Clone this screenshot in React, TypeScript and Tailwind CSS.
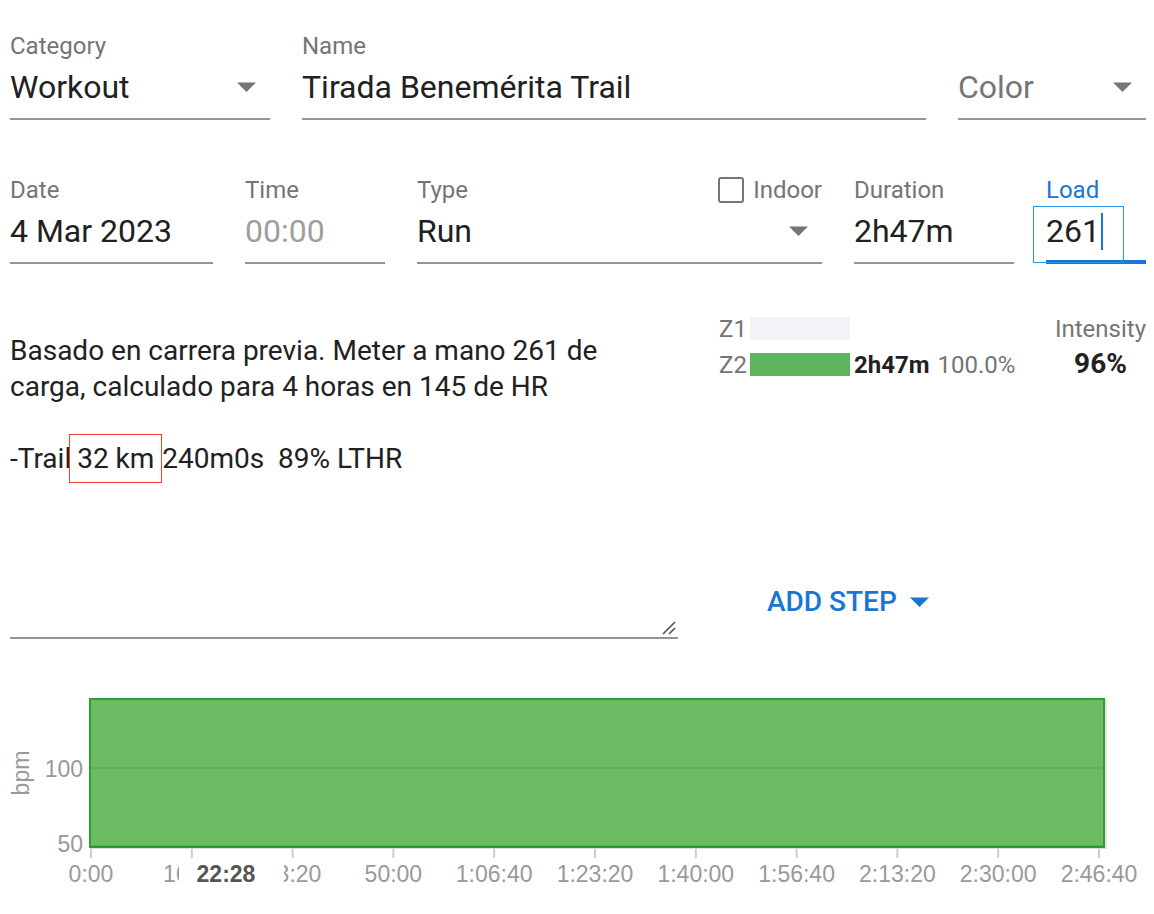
import React from "react"

// ============================================
// SMALL PIECES
// ============================================

function ArrowDrop({ color = "#757575" }: { color?: string }) {
  return (
    <svg width="19" height="10" viewBox="0 0 19 10" className="shrink-0">
      <path d="M0 0.5h19L9.5 10z" fill={color} />
    </svg>
  )
}

type FieldProps = {
  label?: string
  width: string
  children: React.ReactNode
  right?: React.ReactNode
  labelRight?: React.ReactNode
}

function Field({ label, width, children, right, labelRight }: FieldProps) {
  return (
    <div className={`flex flex-col ${width}`}>
      <div className="h-[24px] flex items-center justify-between text-[24px] leading-[24px] text-[#757575]">
        <span>{label}</span>
        {labelRight}
      </div>
      <div className="mt-[10px] h-[52px] border-b-2 border-[#949494] flex items-start justify-between">
        <div className="text-[32px] leading-[38px] text-[#212121] truncate">{children}</div>
        {right && <div className="h-[38px] flex items-center pr-[14px]">{right}</div>}
      </div>
    </div>
  )
}

// ============================================
// CHART
// ============================================

const ticks = ["0:00", "16:40", "33:20", "50:00", "1:06:40", "1:23:20", "1:40:00", "1:56:40", "2:13:20", "2:30:00", "2:46:40"]

function HeartChart() {
  return (
    <svg width="1154" height="234" viewBox="0 0 1154 234" className="block">
      <line x1="90" y1="168" x2="1107" y2="168" stroke="#dddddd" strokeWidth="2" />
      <line x1="1106" y1="19" x2="1106" y2="168" stroke="#e4e4e4" strokeWidth="2" />
      <rect x="90" y="19" width="1014" height="148" fill="#6cbc64" stroke="#2ca02c" strokeWidth="2" />
      <line x1="91" y1="88" x2="1103" y2="88" stroke="rgba(0,0,0,0.07)" strokeWidth="2" />
      <line x1="91" y1="166" x2="1103" y2="166" stroke="rgba(0,0,0,0.07)" strokeWidth="2" />
      <g fontFamily="'Liberation Sans', Arial, sans-serif" fontSize="23" fill="#999999">
        {ticks.map((t, i) => {
          const x = 91 + i * 100.8
          return (
            <g key={t}>
              <line x1={x} y1="169" x2={x} y2="178" stroke="#cccccc" strokeWidth="2" />
              <text x={x} y="202" textAnchor="middle">{t}</text>
            </g>
          )
        })}
        <text x="83" y="97" textAnchor="end">100</text>
        <text x="83" y="172" textAnchor="end">50</text>
        <text transform="translate(29 93) rotate(-90)" textAnchor="middle">bpm</text>
      </g>
      {/* hover label */}
      <rect x="179" y="180" width="105" height="32" fill="#ffffff" />
      <text x="226" y="202" textAnchor="middle" fontFamily="'Liberation Sans', Arial, sans-serif" fontSize="23" fontWeight="bold" fill="#555555">22:28</text>
    </svg>
  )
}

// ============================================
// APP
// ============================================

export default function App() {
  return (
    <div className="w-[1154px] h-[914px] overflow-hidden bg-white pl-[10px] pr-[8px] pt-[34px] font-['Roboto','Noto_Sans',sans-serif]">
      {/* Row 1 */}
      <div className="flex gap-[32px]">
        <Field label="Category" width="w-[260px]" right={<ArrowDrop />}>Workout</Field>
        <Field label="Name" width="w-[624px]">Tirada Benemérita Trail</Field>
        <Field label="" width="w-[188px]" right={<ArrowDrop />}>
          <span className="text-[#757575]">Color</span>
        </Field>
      </div>

      {/* Row 2 */}
      <div className="mt-[58px] flex gap-[32px]">
        <Field label="Date" width="w-[203px]">4 Mar 2023</Field>
        <Field label="Time" width="w-[140px]">
          <span className="text-[#9e9e9e]">00:00</span>
        </Field>
        <Field
          label="Type"
          width="w-[405px]"
          right={<ArrowDrop />}
          labelRight={
            <span className="flex items-center gap-[9px]">
              <span className="w-[26px] h-[26px] border-[2.5px] border-[#757575] rounded-[3px]" />
              <span>Indoor</span>
            </span>
          }
        >
          Run
        </Field>
        <Field label="Duration" width="w-[160px]">2h47m</Field>

        {/* Load, focused */}
        <div className="relative flex flex-col w-[100px]">
          <div className="h-[24px] text-[24px] leading-[24px] text-[#1976d2]">Load</div>
          <div className="mt-[10px] h-[52px] border-b-[4px] border-[#1976d2]">
            <div className="flex items-center h-[38px] text-[32px] text-[#212121]">
              261
              <span className="ml-[1px] w-[2px] h-[37px] bg-[#1976d2]" />
            </div>
          </div>
          <div className="absolute left-[-13px] top-[28px] w-[91px] h-[57px] border-[1.5px] border-[#2196f3]" />
        </div>
      </div>

      {/* Middle section */}
      <div className="flex">
        <div className="relative w-[668px] h-[375px] pt-[69px] border-b-2 border-[#949494] text-[28px] leading-[36px] text-[#212121]">
          <p>Basado en carrera previa. Meter a mano 261 de</p>
          <p>carga, calculado para 4 horas en 145 de HR</p>
          <p>&nbsp;</p>
          <p className="whitespace-pre">
            -Trail<span className="-ml-[2px] border-[1.5px] border-solid border-[color:#f0442c] py-[7px]"> 32 km </span>240m0s  89% LTHR
          </p>
          <svg width="16" height="16" viewBox="0 0 16 16" className="absolute right-[2px] bottom-[2px]">
            <path d="M3 15L15 3M9 15L15 9" stroke="#555" strokeWidth="1.6" />
          </svg>
        </div>

        <div className="ml-[41px] flex-1 flex flex-col pt-[53px]">
          <div className="flex justify-between">
            <div className="flex flex-col gap-[13px] text-[24px]">
              <div className="flex items-center h-[23px]">
                <span className="w-[31px] text-[#757575]">Z1</span>
                <span className="w-[100px] h-[23px] bg-[#f3f3f7]" />
              </div>
              <div className="flex items-center h-[23px]">
                <span className="w-[31px] text-[#757575]">Z2</span>
                <span className="w-[100px] h-[23px] bg-[#5cb45c]" />
                <span className="ml-[4px] font-bold text-[#212121]">2h47m</span>
                <span className="ml-[8px] text-[#757575]">100.0%</span>
              </div>
            </div>
            <div className="flex flex-col items-center">
              <span className="text-[24px] leading-[24px] text-[#757575]">Intensity</span>
              <span className="mt-[9px] text-[28px] leading-[28px] font-bold text-[#212121]">96%</span>
            </div>
          </div>

          <div className="mt-[206px] pl-[48px] flex items-center gap-[13px] text-[#1976d2]">
            <span className="text-[28px] leading-[36px] font-medium">ADD STEP</span>
            <ArrowDrop color="#1976d2" />
          </div>
        </div>
      </div>

      {/* Chart */}
      <div className="mt-[41px] -ml-[10px]">
        <HeartChart />
      </div>
    </div>
  )
}
